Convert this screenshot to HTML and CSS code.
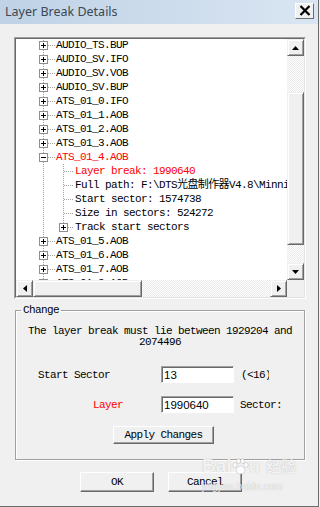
FILE: index.html
```html
<!DOCTYPE html>
<html lang="en">
<head>
<meta charset="UTF-8">
<title>Layer Break Details</title>
<link rel="stylesheet" href="styles.css">
</head>
<body>
<div class="window">
    <div class="titlebar">
        <span class="title">Layer Break Details</span>
        <span class="close">
            <svg width="12" height="11" viewBox="0 0 12 11"><path d="M1.5 1 L10.5 10 M10.5 1 L1.5 10" stroke="#000" stroke-width="2.2" fill="none"/></svg>
        </span>
    </div>

    <!-- tree of the disc files -->
    <div class="treebox">
        <div class="treein">
            <div class="tree-view">
                <div class="tree">
                    <div class="row"><span class="exp"></span><span class="dash"></span>AUDIO_TS.BUP</div>
                    <div class="row"><span class="exp"></span><span class="dash"></span>AUDIO_SV.IFO</div>
                    <div class="row"><span class="exp"></span><span class="dash"></span>AUDIO_SV.VOB</div>
                    <div class="row"><span class="exp"></span><span class="dash"></span>AUDIO_SV.BUP</div>
                    <div class="row"><span class="exp"></span><span class="dash"></span>ATS_01_0.IFO</div>
                    <div class="row"><span class="exp"></span><span class="dash"></span>ATS_01_1.AOB</div>
                    <div class="row"><span class="exp"></span><span class="dash"></span>ATS_01_2.AOB</div>
                    <div class="row"><span class="exp"></span><span class="dash"></span>ATS_01_3.AOB</div>
                    <div class="row red"><span class="exp minus"></span><span class="dash"></span>ATS_01_4.AOB</div>
                    <div class="kids">
                        <div class="row red"><span class="dash long"></span>Layer break: 1990640</div>
                        <div class="row"><span class="dash long"></span>Full path: F:\DTS光盘制作器V4.8\Minnie\DVD-Audio\AUDIO_TS\ATS_01_4.AOB</div>
                        <div class="row"><span class="dash long"></span>Start sector: 1574738</div>
                        <div class="row"><span class="dash long"></span>Size in sectors: 524272</div>
                        <div class="row branch"><span class="exp"></span><span class="dash short"></span>Track start sectors</div>
                    </div>
                    <div class="row"><span class="exp"></span><span class="dash"></span>ATS_01_5.AOB</div>
                    <div class="row"><span class="exp"></span><span class="dash"></span>ATS_01_6.AOB</div>
                    <div class="row"><span class="exp"></span><span class="dash"></span>ATS_01_7.AOB</div>
                    <div class="row"><span class="exp"></span><span class="dash"></span>ATS_01_8.AOB</div>
                </div>
            </div>

            <div class="vscroll">
                <span class="sb-btn"><svg width="7" height="4" viewBox="0 0 7 4"><path d="M3.5 0 L7 4 L0 4 Z" fill="#000"/></svg></span>
                <span class="track top"></span>
                <span class="sb-btn thumb-v"></span>
                <span class="track"></span>
                <span class="sb-btn"><svg width="7" height="4" viewBox="0 0 7 4"><path d="M0 0 L7 0 L3.5 4 Z" fill="#000"/></svg></span>
            </div>

            <div class="hscroll">
                <span class="sb-btn"><svg width="4" height="7" viewBox="0 0 4 7"><path d="M0 3.5 L4 0 L4 7 Z" fill="#000"/></svg></span>
                <span class="sb-btn thumb-h"></span>
                <span class="track"></span>
                <span class="sb-btn"><svg width="4" height="7" viewBox="0 0 4 7"><path d="M0 0 L4 3.5 L0 7 Z" fill="#000"/></svg></span>
            </div>

            <div class="corner"></div>
        </div>
    </div>

    <!-- Change group -->
    <fieldset class="group">
        <legend>Change</legend>
        <p class="note">The layer break must lie between 1929204 and 2074496</p>

        <div class="field">
            <span class="lbl">Start Sector</span>
            <input class="edit" type="text" value="13" readonly>
            <span class="suffix clip">(&lt;16)</span>
        </div>

        <div class="field second">
            <span class="lbl red indent">Layer</span>
            <input class="edit" type="text" value="1990640" readonly>
            <span class="suffix">Sector:</span>
        </div>

        <button class="btn apply">Apply Changes</button>
    </fieldset>

    <div class="actions">
        <button class="btn big">OK</button>
        <button class="btn big">Cancel</button>
    </div>

    <div class="watermark">
        <div class="wm-logo">Bai<svg width="17" height="17" viewBox="0 0 17 17"><g fill="rgba(255,255,255,0.85)" stroke="rgba(120,120,120,0.35)" stroke-width="0.7"><ellipse cx="3" cy="7" rx="2" ry="2.5"/><ellipse cx="6.5" cy="3" rx="2" ry="2.5"/><ellipse cx="10.5" cy="3" rx="2" ry="2.5"/><ellipse cx="14" cy="7" rx="2" ry="2.5"/><path d="M8.5 8 C5 8 3 13 5 15 C7 16.5 10 16.5 12 15 C14 13 12 8 8.5 8 Z"/></g></svg>u<span class="wm-cn">经验</span></div>
        <div class="wm-url">jingyan.baidu.com</div>
    </div>
</div>
</body>
</html>
```

FILE: styles.css
```css
body {
    margin: 0;
    background: #f0f0f0;
    font-family: "Liberation Mono", "Noto Sans CJK SC", monospace;
    font-size: 11px;
    letter-spacing: -0.6px;
    color: #000;
}

.window {
    position: relative;
    width: 318px;
    height: 506px;
    border-right: 1px solid #6b6b6b;
    border-bottom: 1px solid #6b6b6b;
    background: #f0f0f0;
    overflow: hidden;
}

/* Title bar */
.titlebar {
    height: 24px;
    display: flex;
    align-items: center;
    justify-content: space-between;
    padding: 0 4px 0 5px;
    background: linear-gradient(to right, #bfd2e6, #d9e5f2);
}

.title {
    font-family: "Noto Sans", sans-serif;
    font-size: 12.5px;
    letter-spacing: 0;
    color: #3c4856;
    margin-top: -1px;
}

.close {
    width: 19px;
    height: 16px;
    box-sizing: border-box;
    margin-top: -3px;
    display: flex;
    align-items: center;
    justify-content: center;
    background: #f0f0f0;
    border: 1px solid;
    border-color: #fff #6b6b6b #6b6b6b #fff;
}

/* Tree box */
.treebox {
    margin: 13px 0 0 14px;
    width: 292px;
    height: 262px;
    box-sizing: border-box;
    border: 1px solid;
    border-color: #a0a0a0 #fff #fff #a0a0a0;
}

.treein {
    height: 100%;
    box-sizing: border-box;
    border: 1px solid;
    border-color: #696969 #e3e3e3 #e3e3e3 #696969;
    display: grid;
    grid-template-columns: 271px 17px;
    grid-template-rows: 241px 17px;
}

.tree-view {
    overflow: hidden;
    background: #fff;
}

.tree {
    margin-top: -1px;
    background: repeating-linear-gradient(to bottom, #a0a0a0 0 1px, transparent 1px 2px) 27px 0 / 1px 100% no-repeat;
}

.row {
    display: flex;
    align-items: center;
    height: 14px;
    line-height: 14px;
    padding-left: 23px;
    white-space: nowrap;
}

.red {
    color: #ff0000;
}

.exp {
    flex: none;
    width: 9px;
    height: 9px;
    box-sizing: border-box;
    border: 1px solid #8f8f8f;
    background:
        linear-gradient(#000, #000) center / 5px 1px no-repeat,
        linear-gradient(#000, #000) center / 1px 5px no-repeat,
        #fff;
}

.exp.minus {
    background: linear-gradient(#000, #000) center / 5px 1px no-repeat, #fff;
}

.dash {
    flex: none;
    width: 7px;
    height: 1px;
    margin-right: 1px;
    background: repeating-linear-gradient(to right, #a0a0a0 0 1px, transparent 1px 2px);
}

.kids {
    background: repeating-linear-gradient(to bottom, #a0a0a0 0 1px, transparent 1px 2px) 47px 0 / 1px 63px no-repeat;
}

.kids .row {
    padding-left: 48px;
}

.kids .row.branch {
    padding-left: 43px;
}

.dash.long {
    width: 10px;
}

.dash.short {
    width: 6px;
}

/* Scroll bars */
.vscroll,
.hscroll {
    display: flex;
}

.vscroll {
    flex-direction: column;
}

.sb-btn {
    flex: none;
    width: 17px;
    height: 17px;
    box-sizing: border-box;
    display: flex;
    align-items: center;
    justify-content: center;
    background: #f0f0f0;
    border: 1px solid;
    border-color: #f0f0f0 #696969 #696969 #f0f0f0;
    box-shadow: inset 1px 1px #fff, inset -1px -1px #a0a0a0;
}

.thumb-v {
    height: 153px;
}

.thumb-h {
    width: 109px;
}

.track {
    flex: 1;
    background: repeating-conic-gradient(#e9e9e9 0 25%, #fff 0 50%) 0 0 / 2px 2px;
}

.track.top {
    flex: none;
    height: 36px;
}

.corner {
    background: #f0f0f0;
}

/* Change group */
.group {
    margin: 4px 0 0 15px;
    width: 290px;
    height: 157px;
    box-sizing: border-box;
    padding: 0;
    min-width: 0;
    border: 1px solid #a0a0a0;
    box-shadow: inset 1px 1px #fff, 1px 1px #fff;
}

.group legend {
    margin-left: 5px;
    padding: 0 2px;
    line-height: 14px;
    font-family: "Liberation Mono", monospace;
    font-size: 11px;
    letter-spacing: -0.6px;
}

.note {
    margin: 9px 10px 0;
    line-height: 11px;
    text-align: center;
}

.field {
    display: flex;
    align-items: center;
    margin-top: 18px;
}

.field.second {
    margin-top: 13px;
}

.lbl {
    flex: none;
    width: 145px;
    box-sizing: border-box;
    padding-left: 22px;
}

.lbl.indent {
    padding-left: 77px;
}

.edit {
    width: 73px;
    height: 17px;
    box-sizing: border-box;
    margin: 0;
    padding: 0 2px;
    border: 1px solid;
    border-color: #a0a0a0 #fff #fff #a0a0a0;
    box-shadow: inset 1px 1px #696969;
    background: #fff;
    font-family: "Liberation Sans", sans-serif;
    font-size: 11.5px;
    letter-spacing: 0;
    color: #000;
    outline: none;
}

.suffix {
    margin-left: 6px;
    white-space: nowrap;
}

.suffix.clip {
    margin-left: 7px;
    width: 28px;
    overflow: hidden;
}

/* Buttons */
.btn {
    display: block;
    box-sizing: border-box;
    padding: 0;
    background: #f0f0f0;
    border: 1px solid;
    border-color: #fff #696969 #696969 #fff;
    box-shadow: inset -1px -1px #a0a0a0;
    font-family: inherit;
    font-size: 11px;
    letter-spacing: -0.6px;
    color: #000;
}

.apply {
    width: 101px;
    height: 18px;
    margin: 13px 0 0 97px;
}

.actions {
    display: flex;
    gap: 14px;
    margin: 12px 0 0 80px;
}

.big {
    width: 74px;
    height: 20px;
}

/* watermark over the corner */
.watermark {
    position: absolute;
    left: 202px;
    top: 455px;
    color: rgba(255, 255, 255, 0.85);
    text-shadow: 0 0 1px rgba(90, 90, 90, 0.45);
    font-family: "Liberation Sans", sans-serif;
    letter-spacing: 0;
}

.wm-logo {
    display: flex;
    align-items: center;
    font-size: 19px;
    font-weight: bold;
    line-height: 22px;
}

.wm-cn {
    margin-left: 6px;
    font-family: "Noto Sans CJK SC", sans-serif;
    font-size: 15px;
}

.wm-url {
    font-size: 10px;
    line-height: 12px;
    margin-top: 4px;
}
```
